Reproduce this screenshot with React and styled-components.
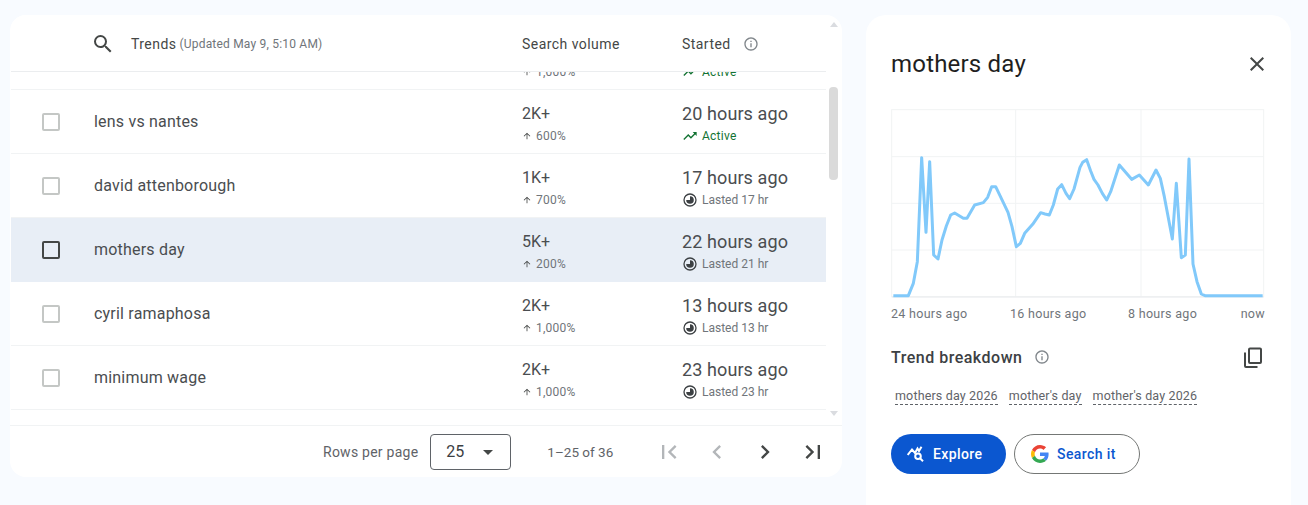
import styled, { createGlobalStyle } from 'styled-components';
import {
  MdSearch,
  MdInfoOutline,
  MdClose,
  MdFirstPage,
  MdLastPage,
  MdChevronLeft,
  MdChevronRight,
  MdTrendingUp,
  MdArrowUpward,
  MdArrowDropDown,
} from 'react-icons/md';

const GlobalStyle = createGlobalStyle`
  html, body {
    margin: 0;
    padding: 0;
    background: #f8fbff;
    font-family: Roboto, "Liberation Sans", sans-serif;
    color: #3c4043;
    overflow: hidden;
  }
`;

const Page = styled.div`
  width: 1308px;
  height: 505px;
  box-sizing: border-box;
  padding: 15px 17px 0 10px;
  display: flex;
  align-items: flex-start;
  gap: 24px;
  overflow: hidden;
`;

const TableCard = styled.div`
  width: 832px;
  height: 462px;
  flex: none;
  background: #fff;
  border-radius: 16px;
  display: flex;
  flex-direction: column;
  overflow: hidden;
`;

const TableArea = styled.div`
  height: 410px;
  flex: none;
  display: flex;
  padding-left: 1px;
`;

const TableColumn = styled.div`
  width: 815px;
  display: flex;
  flex-direction: column;
`;

const HeaderRow = styled.div`
  height: 55px;
  padding-top: 1px;
  flex: none;
  display: grid;
  grid-template-columns: 81px 430px 160px 1fr;
  align-items: center;
  border-bottom: 1px solid #ebedef;
  background: #fff;
  position: relative;
  z-index: 1;
`;

const TrendsHead = styled.div`
  grid-column: 1 / 3;
  display: flex;
  align-items: center;
  padding-left: 80px;
`;

const SearchIcon = styled(MdSearch)`
  font-size: 24px;
  color: #444746;
  margin-right: 16px;
`;

const HeadText = styled.span`
  font-size: 14px;
  letter-spacing: 0.45px;
  color: #444746;
`;

const Updated = styled.span`
  font-size: 12px;
  letter-spacing: 0.2px;
  color: #70757a;
  margin-left: 3px;
`;

const StartedHead = styled.div`
  display: flex;
  align-items: center;
  gap: 12px;
`;

const InfoIcon = styled(MdInfoOutline)`
  font-size: 16px;
  color: #80868b;
`;

const RowsClip = styled.div`
  flex: 1;
  overflow: hidden;
`;

const RowsList = styled.div`
  margin-top: -46px;
`;

const Row = styled.div`
  height: 63px;
  display: grid;
  grid-template-columns: 81px 430px 160px 1fr;
  align-items: center;
  border-bottom: 1px solid ${(p) => (p.$selected ? '#e8eef6' : '#f1f3f4')};
  background: ${(p) => (p.$selected ? '#e8eef6' : '#fff')};
`;

const CheckCell = styled.div`
  padding-left: 31px;
  display: flex;
`;

const Checkbox = styled.span`
  width: 18px;
  height: 18px;
  box-sizing: border-box;
  border-radius: 2px;
  border: 2px solid ${(p) => (p.$selected ? '#444746' : '#c4c7c5')};
`;

const TermName = styled.div`
  font-size: 16px;
  letter-spacing: 0.2px;
  color: #4a4d50;
  padding-left: 2px;
`;

const StackCell = styled.div`
  display: flex;
  flex-direction: column;
  gap: 2px;
  padding-top: 2px;
`;

const MainValue = styled.div`
  font-size: ${(p) => p.$size || 16}px;
  letter-spacing: ${(p) => (p.$size ? 0.1 : 0)}px;
  line-height: 24px;
  color: #4a4d50;
`;

const SubValue = styled.div`
  display: flex;
  align-items: center;
  gap: 4px;
  height: 16px;
  font-size: 12px;
  letter-spacing: ${(p) => (p.$tight ? 0 : 0.25)}px;
  color: ${(p) => (p.$active ? '#137333' : '#70757a')};
`;

const UpArrow = styled(MdArrowUpward)`
  font-size: 10px;
  color: #444746;
`;

const ActiveIcon = styled(MdTrendingUp)`
  font-size: 16px;
  color: #137333;
`;

const LastedMark = styled.svg`
  width: 14px;
  height: 14px;
  margin-left: 1px;
  margin-right: 1px;
`;

const Scrollbar = styled.div`
  width: 15px;
  display: flex;
  flex-direction: column;
  align-items: center;
`;

const ScrollArrow = styled.span`
  width: 0;
  height: 0;
  flex: none;
  border-left: 4.5px solid transparent;
  border-right: 4.5px solid transparent;
  ${(p) => (p.$down ? 'border-top' : 'border-bottom')}: 5px solid #dadce0;
  margin-top: ${(p) => (p.$down ? '231px' : '7px')};
`;

const ScrollThumb = styled.span`
  width: 9px;
  height: 93px;
  flex: none;
  background: #dadada;
  border-radius: 4px;
  margin-top: 60px;
`;

const Footer = styled.div`
  height: 52px;
  flex: none;
  border-top: 1px solid #f1f3f4;
  display: flex;
  align-items: center;
  padding-left: 313px;
  box-sizing: border-box;
  font-size: 14px;
  color: #5f6368;
`;

const RowsLabel = styled.span`
  letter-spacing: 0.25px;
`;

const RowsSelect = styled.div`
  width: 81px;
  height: 36px;
  box-sizing: border-box;
  margin-left: 12px;
  margin-right: 36px;
  padding-left: 15px;
  border: 1px solid #5f6368;
  border-radius: 4px;
  display: flex;
  align-items: center;
  font-size: 16px;
  color: #3c4043;
`;

const SelectCaret = styled(MdArrowDropDown)`
  font-size: 24px;
  color: #444746;
  margin-left: 12px;
`;

const RangeLabel = styled.span`
  font-size: 13.5px;
`;

const Pager = styled.div`
  display: flex;
  margin-left: 32px;
`;

const PagerButton = styled.span`
  width: 48px;
  display: flex;
  justify-content: center;
  font-size: 28px;
  color: ${(p) => (p.$disabled ? '#b3b6b9' : '#444746')};
`;

const DetailPanel = styled.div`
  width: 425px;
  height: 490px;
  flex: none;
  box-sizing: border-box;
  background: #fff;
  border-radius: 20px 20px 0 0;
  padding: 32px 24px 0 25px;
  display: flex;
  flex-direction: column;
`;

const TitleRow = styled.div`
  display: flex;
  align-items: center;
  justify-content: space-between;
  height: 34px;
`;

const Title = styled.h2`
  margin: 0;
  font-size: 24px;
  font-weight: 400;
  letter-spacing: 0.2px;
  color: #1f1f1f;
`;

const CloseIcon = styled(MdClose)`
  font-size: 24px;
  color: #444746;
  margin-right: -2px;
`;

const Chart = styled.svg`
  display: block;
  width: 374px;
  height: 189px;
  margin-top: 28px;
`;

const AxisLabels = styled.div`
  width: 374px;
  display: grid;
  grid-template-columns: 119px 118px 1fr auto;
  margin-top: 8px;
  font-size: 12.5px;
  letter-spacing: 0.3px;
  line-height: 16px;
  color: #70757a;
`;

const BreakdownHead = styled.div`
  display: flex;
  align-items: center;
  margin-top: 23px;
  height: 24px;
`;

const BreakdownTitle = styled.div`
  font-size: 16px;
  font-weight: 500;
  letter-spacing: 0.5px;
  color: #3c4043;
`;

const BreakdownInfo = styled(InfoIcon)`
  margin-left: 12px;
`;

const CopyMark = styled.svg`
  width: 18px;
  height: 21px;
  margin-left: auto;
  margin-right: 5px;
`;

const Chips = styled.div`
  display: flex;
  gap: 11px;
  padding-left: 4px;
  margin-top: 19px;
`;

const Chip = styled.span`
  font-size: 12.5px;
  letter-spacing: 0.15px;
  line-height: 16px;
  color: #5f6368;
  border-bottom: 1px dashed #5f6368;
`;

const Actions = styled.div`
  display: flex;
  gap: 8px;
  margin-top: 29px;
`;

const ExploreButton = styled.button`
  width: 115px;
  height: 40px;
  border: none;
  border-radius: 20px;
  background: #0b57d0;
  color: #fff;
  font: 500 14px Roboto, sans-serif;
  letter-spacing: 0.4px;
  display: flex;
  align-items: center;
  gap: 8px;
  padding: 0 0 0 16px;
`;

const SearchButton = styled.button`
  width: 126px;
  height: 40px;
  box-sizing: border-box;
  border: 1px solid #747775;
  border-radius: 20px;
  background: #fff;
  color: #0b57d0;
  font: 500 14px Roboto, sans-serif;
  letter-spacing: 0.4px;
  display: flex;
  align-items: center;
  gap: 8px;
  padding: 0 0 0 16px;
`;

const rows = [
  { name: '', volume: '2K+', growth: '1,000%', started: '19 hours ago', active: true },
  { name: 'lens vs nantes', volume: '2K+', growth: '600%', started: '20 hours ago', active: true },
  { name: 'david attenborough', volume: '1K+', growth: '700%', started: '17 hours ago', lasted: 'Lasted 17 hr' },
  { name: 'mothers day', volume: '5K+', growth: '200%', started: '22 hours ago', lasted: 'Lasted 21 hr', selected: true },
  { name: 'cyril ramaphosa', volume: '2K+', growth: '1,000%', started: '13 hours ago', lasted: 'Lasted 13 hr' },
  { name: 'minimum wage', volume: '2K+', growth: '1,000%', started: '23 hours ago', lasted: 'Lasted 23 hr' },
];

// traced from the trend line, in thirds of a pixel
const linePoints = [
  [7, 560], [52, 560], [67, 523], [79, 458], [92, 146], [105, 370], [116, 158], [128, 438], [141, 450],
  [153, 393], [166, 351], [179, 318], [191, 312], [217, 328], [228, 328], [251, 288], [277, 281], [290, 265],
  [302, 233], [314, 233], [327, 260], [351, 310], [363, 353], [376, 413], [388, 403], [401, 373], [425, 346],
  [449, 311], [462, 315], [475, 318], [487, 288], [500, 240], [512, 227], [525, 253], [536, 269], [549, 240],
  [562, 193], [567, 175], [575, 160], [587, 152], [599, 186], [609, 211], [621, 228], [634, 253], [647, 273],
  [659, 248], [685, 168], [722, 211], [745, 198], [772, 228], [795, 183], [808, 208], [820, 263], [844, 390],
  [856, 223], [871, 446], [883, 438], [894, 150], [906, 465], [918, 518], [931, 555], [942, 560], [1115, 560],
];

function LastedIcon() {
  return (
    <LastedMark viewBox="0 0 14 14">
      <circle cx="7" cy="7" r="6" fill="none" stroke="#3c4043" strokeWidth="1.3" />
      <path d="M7 3.2A3.8 3.8 0 1 1 3.2 7H7Z" fill="#3c4043" />
    </LastedMark>
  );
}

function CopyIcon() {
  return (
    <CopyMark viewBox="0 0 18 21" fill="none" stroke="#444746" strokeWidth="2">
      <rect x="5" y="1.5" width="12" height="14.5" rx="1" />
      <path d="M1 5.5V19a1 1 0 0 0 1 1H13.5" />
    </CopyMark>
  );
}

function ExploreIcon() {
  return (
    <svg width="18" height="18" viewBox="0 0 18 18" fill="none" stroke="#fff" strokeWidth="2">
      <path d="M.7 10 5 4.5 8 8 10.5 3.5 12 6 14.5 1.7" />
      <circle cx="11" cy="11.2" r="2.8" />
      <path d="M13 13.2 16 16.2" />
    </svg>
  );
}

function GoogleIcon() {
  return (
    <svg width="18" height="18" viewBox="0 0 48 48">
      <path fill="#EA4335" d="M24 9.5c3.5 0 6.7 1.2 9.2 3.6l6.9-6.9C35.9 2.4 30.5 0 24 0 14.6 0 6.5 5.4 2.6 13.2l8 6.2C12.5 13.7 17.8 9.5 24 9.5z" />
      <path fill="#4285F4" d="M46.9 24.5c0-1.6-.1-3.1-.4-4.5H24v9h12.9c-.6 3-2.2 5.5-4.7 7.2l7.7 6c4.5-4.2 7-10.3 7-17.7z" />
      <path fill="#FBBC05" d="M10.5 28.6c-.5-1.5-.8-3-.8-4.6s.3-3.1.8-4.6l-8-6.2C.9 16.5 0 20.1 0 24s.9 7.5 2.6 10.8l7.9-6.2z" />
      <path fill="#34A853" d="M24 48c6.5 0 11.9-2.1 15.9-5.8l-7.7-6c-2.1 1.4-4.9 2.3-8.2 2.3-6.2 0-11.5-4.2-13.4-9.9l-8 6.2C6.5 42.6 14.6 48 24 48z" />
    </svg>
  );
}

function TrendChart() {
  const grid = '#f1f3f4';
  return (
    <Chart viewBox="0 0 1122 567">
      <g stroke={grid} strokeWidth="3" fill="none">
        <rect x="2" y="2" width="1116" height="561" />
        <path d="M2 143H1118M2 283H1118M2 423H1118M374 2V563M750 2V563" />
      </g>
      <path d="M2 564H1118" stroke="#e8eaed" strokeWidth="3" />
      <polyline
        points={linePoints.map((p) => p.join(',')).join(' ')}
        fill="none"
        stroke="#81c9fa"
        strokeWidth="9"
        strokeLinejoin="round"
      />
    </Chart>
  );
}

export default function App() {
  return (
    <Page>
      <GlobalStyle />
      <TableCard>
        <TableArea>
          <TableColumn>
            <HeaderRow>
              <TrendsHead>
                <SearchIcon />
                <HeadText>Trends</HeadText>
                <Updated>(Updated May 9, 5:10 AM)</Updated>
              </TrendsHead>
              <HeadText>Search volume</HeadText>
              <StartedHead>
                <HeadText>Started</HeadText>
                <InfoIcon />
              </StartedHead>
            </HeaderRow>
            <RowsClip>
              <RowsList>
                {rows.map((row, i) => (
                  <Row key={i} $selected={row.selected}>
                    <CheckCell>
                      <Checkbox $selected={row.selected} />
                    </CheckCell>
                    <TermName>{row.name}</TermName>
                    <StackCell>
                      <MainValue>{row.volume}</MainValue>
                      <SubValue>
                        <UpArrow />
                        {row.growth}
                      </SubValue>
                    </StackCell>
                    <StackCell>
                      <MainValue $size={18}>{row.started}</MainValue>
                      {row.active ? (
                        <SubValue $active>
                          <ActiveIcon />
                          Active
                        </SubValue>
                      ) : (
                        <SubValue $tight>
                          <LastedIcon />
                          {row.lasted}
                        </SubValue>
                      )}
                    </StackCell>
                  </Row>
                ))}
              </RowsList>
            </RowsClip>
          </TableColumn>
          <Scrollbar>
            <ScrollArrow />
            <ScrollThumb />
            <ScrollArrow $down />
          </Scrollbar>
        </TableArea>
        <Footer>
          <RowsLabel>Rows per page</RowsLabel>
          <RowsSelect>
            25
            <SelectCaret />
          </RowsSelect>
          <RangeLabel>1–25 of 36</RangeLabel>
          <Pager>
            <PagerButton $disabled>
              <MdFirstPage />
            </PagerButton>
            <PagerButton $disabled>
              <MdChevronLeft />
            </PagerButton>
            <PagerButton>
              <MdChevronRight />
            </PagerButton>
            <PagerButton>
              <MdLastPage />
            </PagerButton>
          </Pager>
        </Footer>
      </TableCard>
      <DetailPanel>
        <TitleRow>
          <Title>mothers day</Title>
          <CloseIcon />
        </TitleRow>
        <TrendChart />
        <AxisLabels>
          <span>24 hours ago</span>
          <span>16 hours ago</span>
          <span>8 hours ago</span>
          <span>now</span>
        </AxisLabels>
        <BreakdownHead>
          <BreakdownTitle>Trend breakdown</BreakdownTitle>
          <BreakdownInfo />
          <CopyIcon />
        </BreakdownHead>
        <Chips>
          <Chip>mothers day 2026</Chip>
          <Chip>mother's day</Chip>
          <Chip>mother's day 2026</Chip>
        </Chips>
        <Actions>
          <ExploreButton>
            <ExploreIcon />
            Explore
          </ExploreButton>
          <SearchButton>
            <GoogleIcon />
            Search it
          </SearchButton>
        </Actions>
      </DetailPanel>
    </Page>
  );
}
